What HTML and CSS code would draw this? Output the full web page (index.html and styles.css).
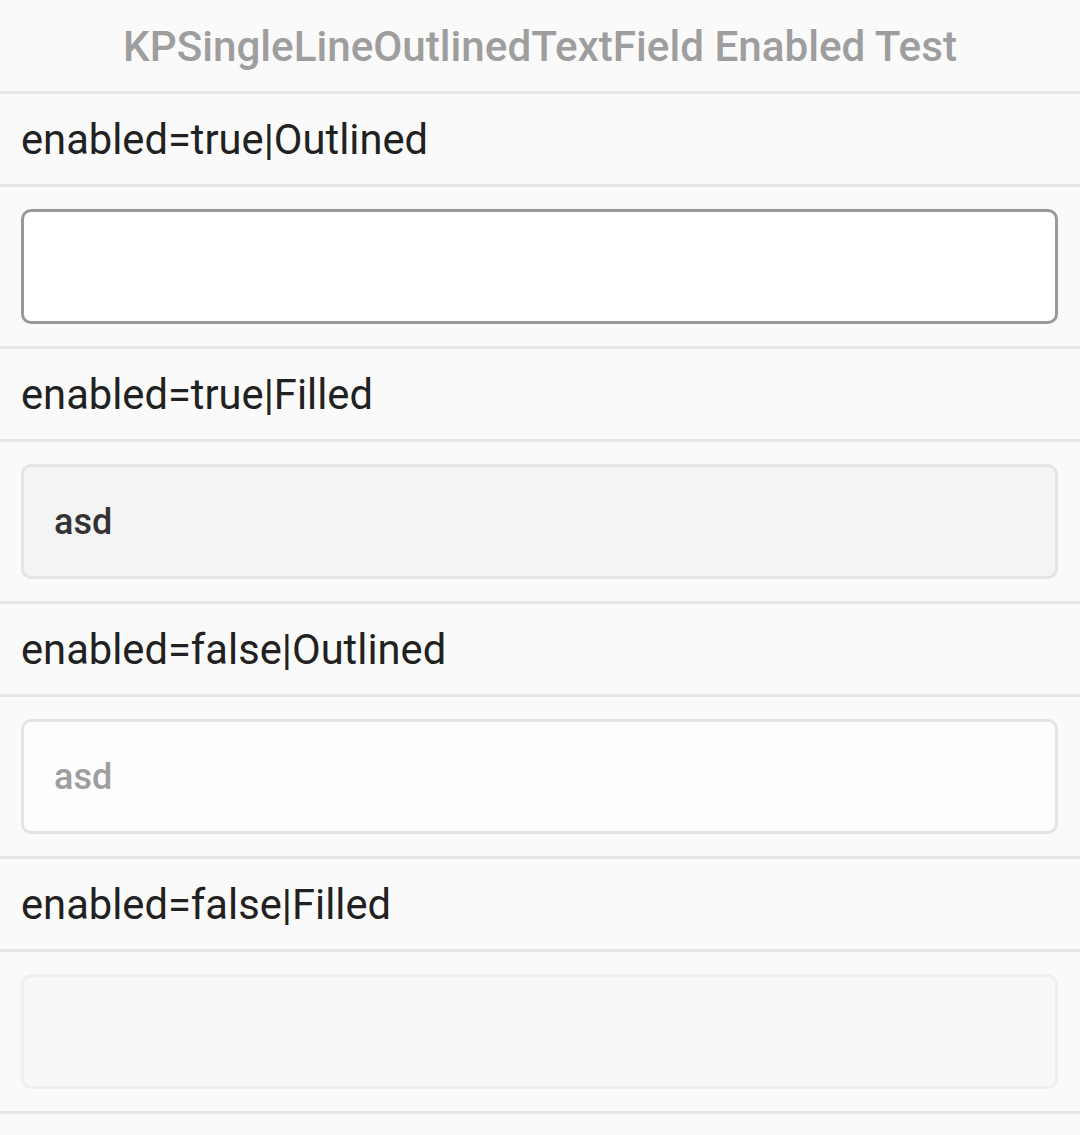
FILE: index.html
```html
<!DOCTYPE html>
<html>
<head>
<meta charset="utf-8">
<link rel="stylesheet" href="styles.css">
</head>
<body>
<div class="page">
  <header class="title">KPSingleLineOutlinedTextField Enabled Test</header>
  <div class="label">enabled=true|Outlined</div>
  <div class="field-row"><div class="field outlined"></div></div>
  <div class="label">enabled=true|Filled</div>
  <div class="field-row"><div class="field filled"><span class="value">asd</span></div></div>
  <div class="label">enabled=false|Outlined</div>
  <div class="field-row"><div class="field outlined-disabled"><span class="value disabled">asd</span></div></div>
  <div class="label">enabled=false|Filled</div>
  <div class="field-row"><div class="field filled-disabled"></div></div>
</div>
</body>
</html>
```
FILE: styles.css
```css
html, body {
  margin: 0;
  padding: 0;
  background: #fafafa;
}
body {
  font-family: Roboto, "Noto Sans", sans-serif;
}
.page {
  display: flex;
  flex-direction: column;
}
.title {
  box-sizing: content-box;
  height: 89px;
  padding-top: 2px;
  border-bottom: 3px solid #e6e6e6;
  display: flex;
  align-items: center;
  justify-content: center;
  color: #9e9e9e;
  font-weight: 500;
  font-size: 42.2px;
}
.label {
  height: 90px;
  border-bottom: 3px solid #e6e6e6;
  display: flex;
  align-items: center;
  padding-left: 21px;
  color: #212121;
  font-size: 41.7px;
}
.field-row {
  padding: 22px 22px 22px 21px;
  border-bottom: 3px solid #e6e6e6;
}
.field {
  height: 115px;
  box-sizing: border-box;
  border-radius: 10px;
  display: flex;
  align-items: center;
  padding-left: 30px;
}
.outlined {
  background: #ffffff;
  border: 3px solid #999999;
}
.filled {
  background: #f4f4f4;
  border: 3px solid #e4e4e4;
}
.outlined-disabled {
  background: #fdfdfd;
  border: 3px solid #e4e4e4;
}
.filled-disabled {
  background: #f8f8f8;
  border: 3px solid #efefef;
}
.value {
  font-size: 36px;
  font-weight: 500;
  color: #333333;
}
.value.disabled {
  color: #9e9e9e;
}
```
